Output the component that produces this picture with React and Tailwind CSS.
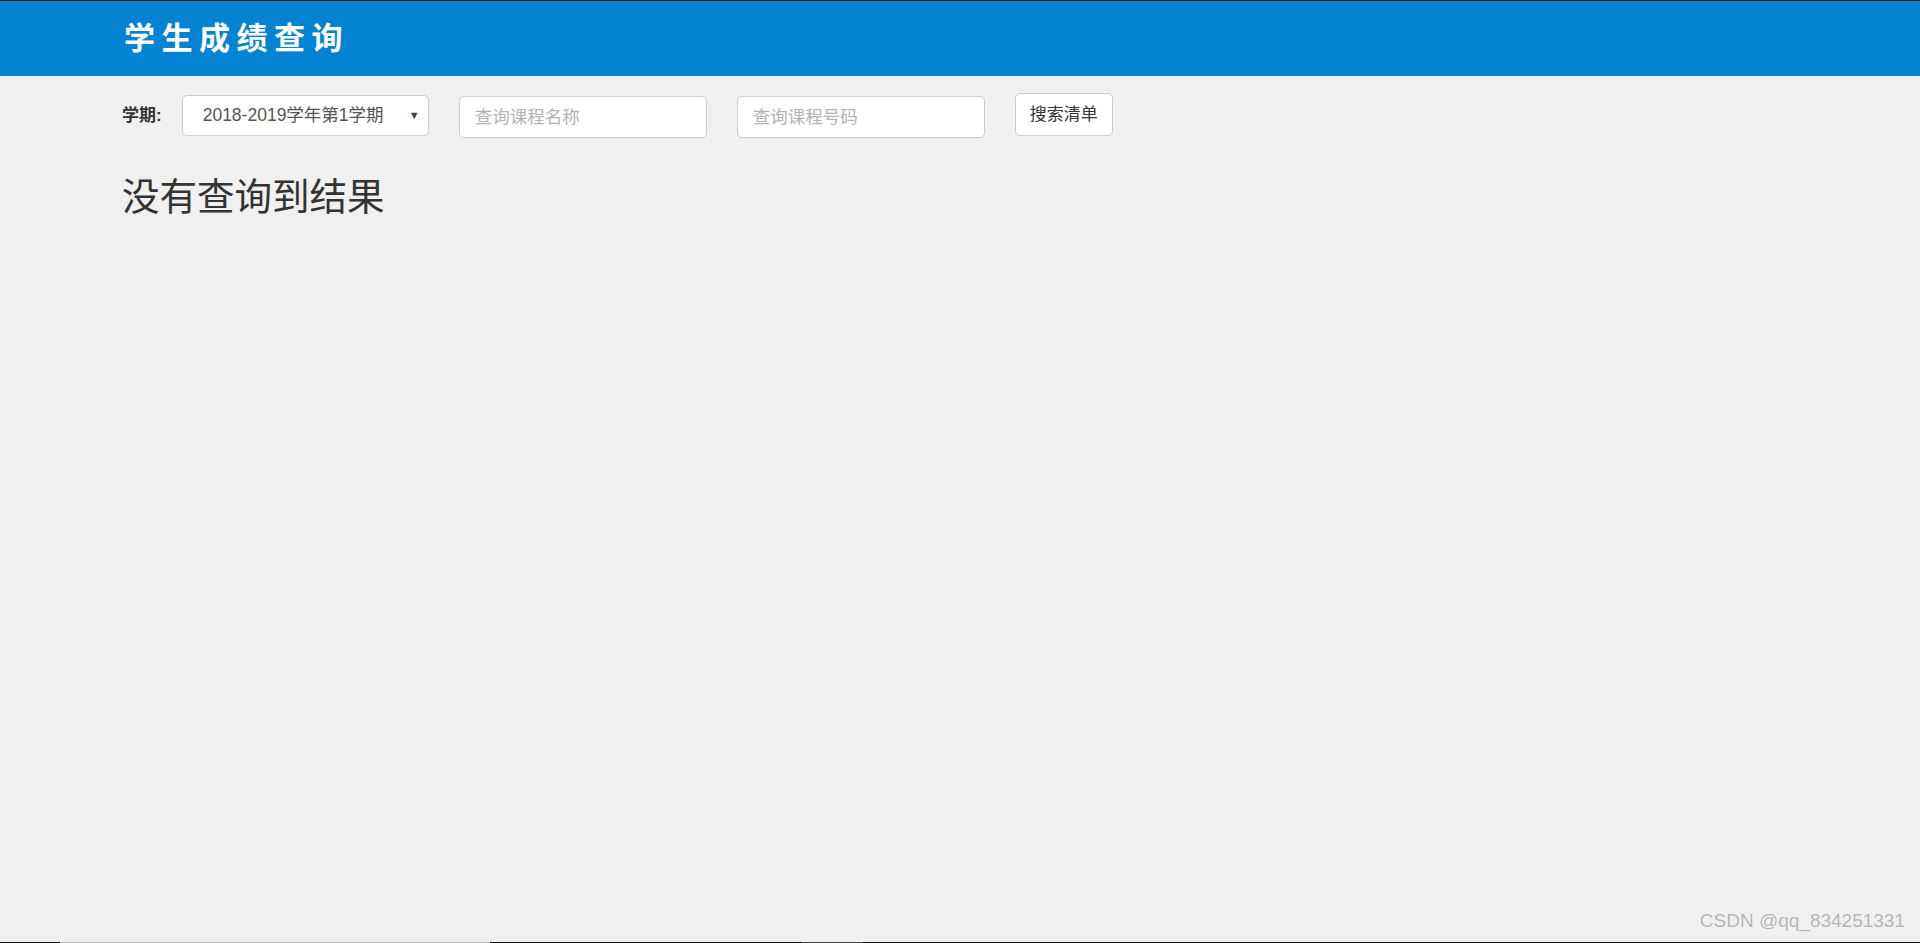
import React from "react";

const font = { fontFamily: '"Liberation Sans", "Noto Sans CJK SC", sans-serif' };

export default function App() {
  return (
    <div
      className="relative h-[943px] w-full overflow-hidden bg-[#f0f0f0] flex flex-col text-[#333]"
      style={font}
    >
      {/* top edge */}
      <div className="h-px w-full bg-[#1c1c1c]" />

      {/* Header */}
      <header className="h-[75px] bg-[#0583d3] flex items-center pl-[124px]">
        <h1 className="text-[31px] font-bold tracking-[6.5px] text-white leading-none">
          学生成绩查询
        </h1>
      </header>

      {/* Search bar */}
      <div className="flex items-start pl-[122px] pt-[18px]">
        <label className="mt-[12px] text-[17px] font-bold text-[#333] leading-[20px]">
          学期:
        </label>
        <div className="ml-[20px] mt-[1px] relative w-[247px] h-[41px] bg-white border border-[#ccc] rounded-[5px] flex items-center pl-[20px]">
          <span className="text-[17.5px] text-[#555]">2018-2019学年第1学期</span>
          <span className="absolute right-[8px] top-[11px] text-[11px] text-[#444]">▼</span>
        </div>
        <input
          className="ml-[30px] mt-[2px] w-[248px] h-[42px] bg-white border border-[#ccc] rounded-[5px] px-[15px] text-[17.5px] placeholder:text-[#b3b3b3] outline-none"
          placeholder="查询课程名称"
        />
        <input
          className="ml-[30px] mt-[2px] w-[248px] h-[42px] bg-white border border-[#ccc] rounded-[5px] px-[15px] text-[17.5px] placeholder:text-[#b3b3b3] outline-none"
          placeholder="查询课程号码"
        />
        <button className="ml-[30px] -mt-[1px] w-[98px] h-[43px] bg-white border border-[#ccc] rounded-[5px] text-[17px] text-[#333]">
          搜索清单
        </button>
      </div>

      {/* Result */}
      <h2 className="pl-[122px] mt-[39px] text-[37.5px] font-normal leading-[40px] text-[#333]">
        没有查询到结果
      </h2>

      <div className="flex-1" />

      {/* bottom edge */}
      <div className="h-px w-full flex">
        <div className="w-[60px] bg-[#111]" />
        <div className="w-[430px] bg-[#bdbdbd]" />
        <div className="w-[312px] bg-[#111]" />
        <div className="w-[61px] bg-[#444]" />
        <div className="flex-1 bg-[#111]" />
      </div>

      {/* watermark */}
      <div className="absolute right-[15px] bottom-[8px] text-[19px] text-[#b5b5b5] [text-shadow:0_0_1px_#fff]">
        CSDN @qq_834251331
      </div>
    </div>
  );
}
